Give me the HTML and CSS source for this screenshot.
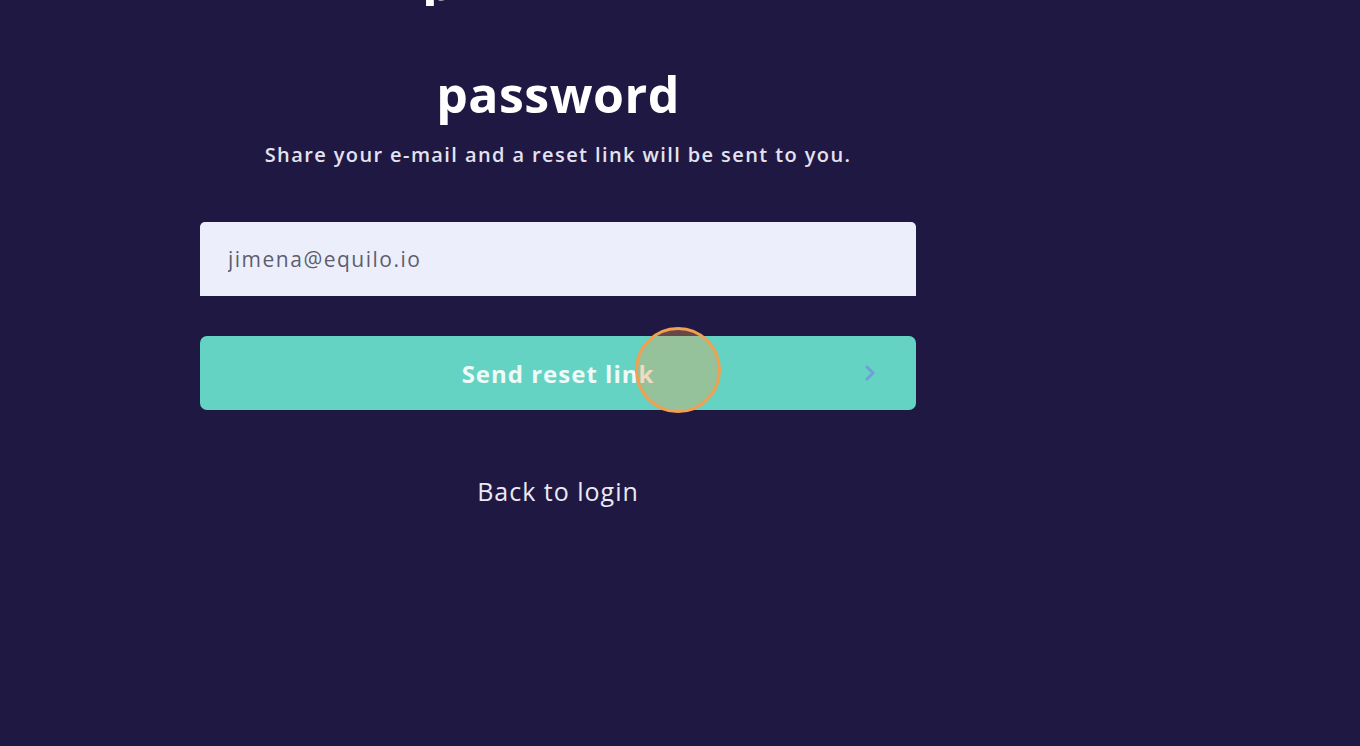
FILE: index.html
```html
<!DOCTYPE html>
<html>
<head>
    <title>Equilo - Reset password</title>
    <link rel="stylesheet" href="styles.css">
</head>
<body>
    <main class="page">
        <section class="reset-card">
            <div class="title-top"><span class="title-top-glyph">p</span></div>
            <h1 class="title">password</h1>
            <p class="subtitle">Share your e-mail and a reset link will be sent to you.</p>

            <form class="reset-form" action="/reset-password" method="post">
                <input class="email-input" type="email" name="email" value="jimena@equilo.io">
                <button class="send-btn" type="submit">
                    <span>Send reset link</span>
                    <svg class="send-chevron" width="12" height="18" viewBox="0 0 12 18">
                        <path d="M3 3 L9 9 L3 15" fill="none" stroke="#6f95d8" stroke-width="3" stroke-linecap="round" stroke-linejoin="round"/>
                    </svg>
                    <span class="click-dot"></span>
                </button>
            </form>

            <a class="back-link" href="/login">Back to login</a>
        </section>
    </main>
</body>
</html>
```

FILE: styles.css
```css
html, body { height: 100%; }
body { margin: 0; background: #1f1842; font-family: "Open Sans", sans-serif; color: #fff; overflow: hidden; }
.page { padding-left: 200px; }
.reset-card { width: 716px; display: flex; flex-direction: column; align-items: center; }
.title-top { width: 100%; height: 6px; overflow: hidden; position: relative; }
.title-top-glyph { position: absolute; left: 222px; bottom: 0; font-size: 52px; font-weight: 700; line-height: 1; color: #fff; }
.title { margin: 58px 0 0; font-size: 50px; font-weight: 700; line-height: 1.2; letter-spacing: 0.5px; }
.subtitle { margin: 17px 0 0; font-size: 20px; font-weight: 600; color: #e4e2ef; letter-spacing: 1.4px; }
.reset-form { width: 100%; margin-top: 54px; display: flex; flex-direction: column; gap: 40px; }
.email-input { box-sizing: border-box; width: 100%; height: 74px; padding: 0 28px; border: none; border-radius: 5px 5px 0 0; background: #eceffb; font-family: "Open Sans", sans-serif; font-size: 21px; letter-spacing: 1.5px; color: #5d5d6e; outline: none; }
.send-btn { position: relative; box-sizing: border-box; width: 100%; height: 74px; display: flex; align-items: center; justify-content: center; border: none; border-radius: 7px; background: #64d3c3; font-family: "Open Sans", sans-serif; font-size: 24px; font-weight: 700; letter-spacing: 1px; color: #effbf8; cursor: pointer; }
.send-chevron { position: absolute; right: 40px; top: 28px; opacity: 0.8; }
.click-dot { position: absolute; left: 435px; top: -9px; width: 80px; height: 80px; border: 3px solid #f0a050; border-radius: 50%; background: rgba(240, 160, 80, 0.35); }
.back-link { margin-top: 64px; font-size: 25px; font-weight: 500; letter-spacing: 1px; color: #ebe9f4; text-decoration: none; }
```
